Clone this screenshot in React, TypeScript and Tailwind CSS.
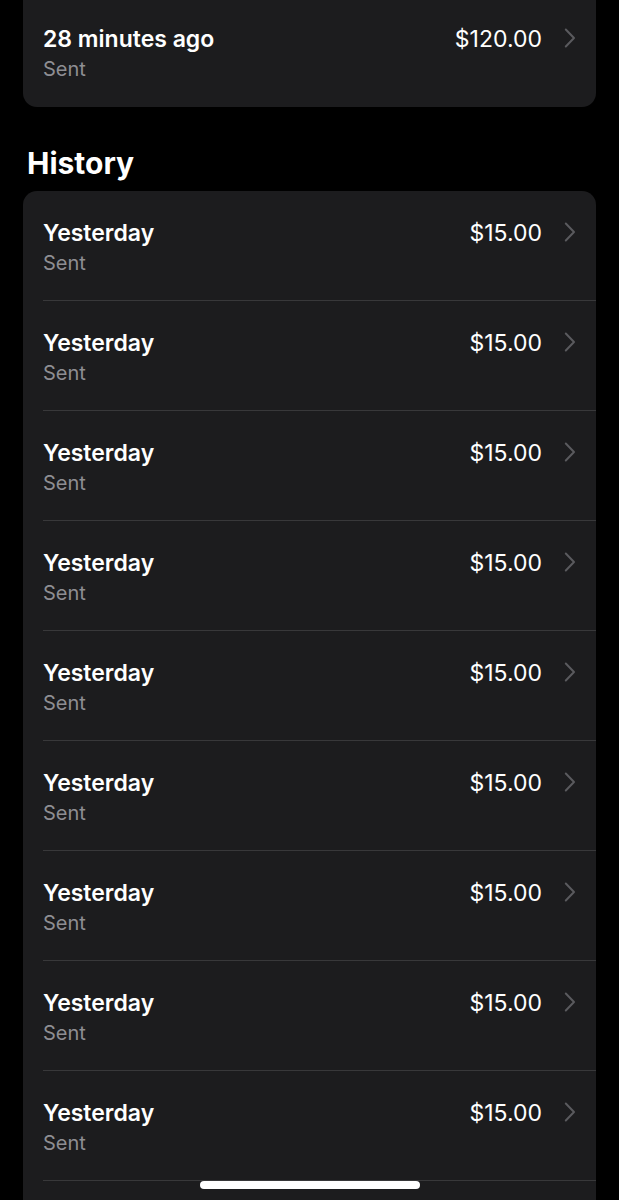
const history = Array.from({ length: 9 }, () => ({
  when: "Yesterday",
  status: "Sent",
  amount: "$15.00",
}));

function Chevron() {
  return (
    <svg viewBox="0 0 12 20" className="ml-[22px] mt-[4px] w-[12px] h-[20px]" fill="none">
      <path d="M1.8 1.5 L10 10 L1.8 18.5" stroke="#5a5a5e" strokeWidth="2" strokeLinecap="round" strokeLinejoin="round" />
    </svg>
  );
}

function Row({ when, status, amount, divider }: { when: string; status: string; amount: string; divider?: boolean }) {
  return (
    <div className="relative flex items-start h-[110px] pl-[20px] pr-[20px] pt-[27px]">
      <div className="flex-1">
        <div className="text-[23px] leading-[30px] font-semibold text-white">{when}</div>
        <div className="text-[20px] leading-[31px] text-[#8e8e93]">{status}</div>
      </div>
      <div className="text-[23px] leading-[30px] text-white">{amount}</div>
      <Chevron />
      {divider && <div className="absolute bottom-0 left-[20px] right-0 h-px bg-[#38383a]" />}
    </div>
  );
}

export default function App() {
  return (
    <div className="relative h-[1200px] overflow-hidden bg-black px-[23px]" style={{ fontFamily: "Inter, 'Liberation Sans', sans-serif" }}>
      {/* RECENT */}
      <div className="-mt-[3px] rounded-b-[14px] bg-[#1c1c1e]">
        <Row when="28 minutes ago" status="Sent" amount="$120.00" />
      </div>

      {/* HISTORY */}
      <h2 className="mt-[38px] mb-[10px] pl-[4px] text-[30px] leading-[36px] font-bold text-white">History</h2>
      <div className="rounded-t-[14px] bg-[#1c1c1e]">
        {history.map((h, i) => (
          <Row key={i} {...h} divider />
        ))}
        <div className="h-[40px]" />
      </div>

      {/* HOME INDICATOR */}
      <div className="absolute left-[200px] top-[1181px] h-[8px] w-[220px] rounded-full bg-white" />
    </div>
  );
}
